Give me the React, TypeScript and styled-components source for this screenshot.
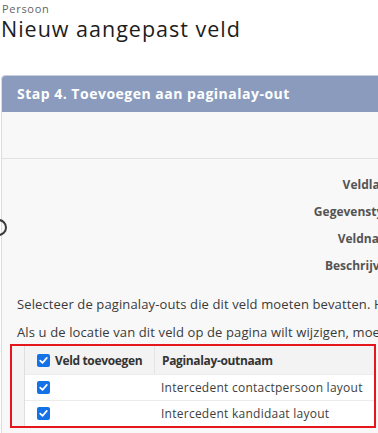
import React from 'react';
import styled, { createGlobalStyle } from 'styled-components';

const GlobalStyle = createGlobalStyle`
  html, body {
    margin: 0;
    padding: 0;
    background: #ffffff;
    overflow: hidden;
  }
  body {
    font-family: "Open Sans", "Liberation Sans", Arial, sans-serif;
  }
  #root {
    width: 378px;
    height: 433px;
    overflow: hidden;
  }
`;

const Page = styled.div`
  width: 378px;
  height: 433px;
  overflow: hidden;
`;

const ObjectName = styled.div`
  margin: 3px 0 0 2px;
  font-size: 11px;
  line-height: 12px;
  letter-spacing: 0.7px;
  color: #636363;
`;

const Title = styled.h1`
  margin: 1px 0 0 1px;
  font-size: 21.5px;
  line-height: 25px;
  letter-spacing: 1px;
  font-weight: normal;
  color: #1d1d1d;
`;

const Panel = styled.section`
  margin: 34px 0 0 1px;
  width: 720px;
  background: #f8f8f8;
  border-left: 1px solid #dcdcdc;
  border-radius: 4px 4px 0 0;
  padding-bottom: 40px;
`;

const PanelHeader = styled.div`
  height: 37px;
  line-height: 36px;
  padding-left: 15px;
  background: #8a9bbe;
  border-top: 1px solid #c7cfdf;
  border-radius: 4px 4px 0 0;
  color: #ffffff;
  font-weight: bold;
  font-size: 14px;
  letter-spacing: 0.5px;
  box-sizing: border-box;
`;

const Blank = styled.div`
  height: 47px;
  border-bottom: 1px solid #e2e2e2;
  box-sizing: border-box;
`;

const Details = styled.div`
  position: relative;
  display: grid;
  grid-template-columns: 396px 1fr;
  padding-top: 12px;
`;

const Label = styled.div`
  grid-column: 1;
  height: 27px;
  line-height: 27px;
  text-align: right;
  font-size: 12px;
  font-weight: bold;
  color: #545454;
  white-space: nowrap;
`;

const EdgeRing = styled.span`
  position: absolute;
  left: -12px;
  top: 60px;
  width: 13px;
  height: 13px;
  border: 2px solid #3a3a3a;
  border-radius: 50%;
`;

const Instruction = styled.p`
  margin: 17px 0 0 15px;
  font-size: 13px;
  line-height: 16px;
  letter-spacing: 0.12px;
  color: #3a3a3a;
  white-space: nowrap;

  & + & {
    margin-top: 12px;
  }
`;

const Highlight = styled.div`
  margin: 4px 0 0 8px;
  width: 366px;
  height: 84px;
  border: 2px solid #e5161c;
  box-sizing: border-box;
  overflow: hidden;
  display: flex;
  background: #ffffff;
`;

const Gutter = styled.div`
  width: 12px;
  flex-shrink: 0;
  background: #f4f4f4;
  border-right: 1px solid #dedede;
`;

const Table = styled.div`
  flex: 1;
  display: grid;
  grid-template-columns: 129px 1fr;
  grid-auto-rows: 26px;
  grid-template-rows: 29px;
`;

const Cell = styled.div<{ head?: boolean; divider?: boolean }>`
  display: flex;
  align-items: center;
  gap: 5px;
  padding-left: ${({ divider }) => (divider ? '7px' : '12px')};
  background: ${({ head }) => (head ? '#f3f3f3' : '#ffffff')};
  border-left: ${({ head, divider }) => (head && divider ? '1px solid #e4e4e4' : 'none')};
  border-bottom: 1px solid #ececec;
  font-size: 12px;
  font-weight: ${({ head }) => (head ? 'bold' : 'normal')};
  letter-spacing: ${({ head }) => (head ? '-0.35px' : '0.25px')};
  color: ${({ head }) => (head ? '#333333' : '#3e3e3c')};
  white-space: nowrap;
`;

const Box = styled.span`
  display: inline-flex;
  align-items: center;
  justify-content: center;
  width: 13px;
  height: 13px;
  border-radius: 2px;
  background: #1471e6;
  flex-shrink: 0;
`;

const Check = () => (
  <Box>
    <svg width="9" height="9" viewBox="0 0 9 9" fill="none">
      <path d="M1.2 4.6 L3.5 6.9 L7.8 1.9" stroke="#ffffff" strokeWidth="1.7" strokeLinecap="round" strokeLinejoin="round" />
    </svg>
  </Box>
);

const layouts = ['Intercedent contactpersoon layout', 'Intercedent kandidaat layout'];
const labels = ['Veldlabel', 'Gegevenstype', 'Veldnaam', 'Beschrijving'];

export default function App() {
  return (
    <Page>
      <GlobalStyle />
      <ObjectName>Persoon</ObjectName>
      <Title>Nieuw aangepast veld</Title>
      <Panel>
        <PanelHeader>Stap 4. Toevoegen aan paginalay-out</PanelHeader>
        <Blank />
        <Details>
          <EdgeRing />
          {labels.map((l) => (
            <Label key={l}>{l}</Label>
          ))}
        </Details>
        <Instruction>
          Selecteer de paginalay-outs die dit veld moeten bevatten. Het veld wordt toegevoegd als de laatste
        </Instruction>
        <Instruction>
          Als u de locatie van dit veld op de pagina wilt wijzigen, moet u de paginalay-out aanpassen.
        </Instruction>
        <Highlight>
          <Gutter />
          <Table>
            <Cell head>
              <Check />
              Veld toevoegen
            </Cell>
            <Cell head divider>
              Paginalay-outnaam
            </Cell>
            {layouts.map((name) => (
              <React.Fragment key={name}>
                <Cell>
                  <Check />
                </Cell>
                <Cell divider>{name}</Cell>
              </React.Fragment>
            ))}
          </Table>
        </Highlight>
      </Panel>
    </Page>
  );
}
